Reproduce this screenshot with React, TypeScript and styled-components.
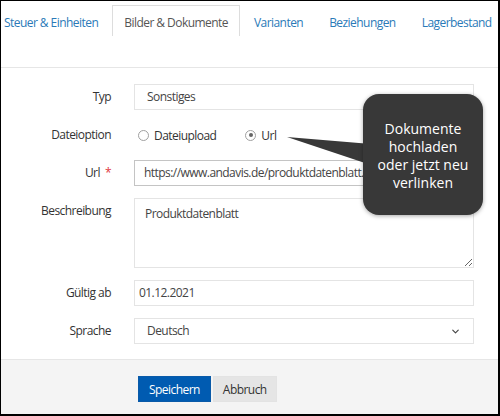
import React from "react";
import styled, { createGlobalStyle } from "styled-components";
import { ChevronDown } from "lucide-react";

const GlobalStyle = createGlobalStyle`
  body {
    margin: 0;
    font-family: "Open Sans", "Noto Sans", sans-serif;
    background: #ffffff;
  }
`;

// the screenshot's text runs narrower than plain Open Sans, so tighten it
const uiText = `
  font-size: 12px;
  letter-spacing: -0.55px;
`;

const Frame = styled.div`
  position: relative;
  box-sizing: border-box;
  width: 500px;
  height: 416px;
  display: flex;
  flex-direction: column;
  overflow: hidden;
  border-style: solid;
  border-color: #000;
  border-width: 1px 2px 2px 1px;
  background: #fff;
`;

const TabBar = styled.div`
  display: flex;
  padding-top: 4px;
  margin-left: -9px;
  height: 31px;
`;

const Tab = styled.div<{ $active?: boolean }>`
  box-sizing: border-box;
  height: 31px;
  padding: 7px 11px 0;
  margin-right: 2px;
  ${uiText}
  line-height: 20px;
  white-space: nowrap;
  color: ${(p) => (p.$active ? "#555555" : "#2a7ab8")};
  border: 1px solid ${(p) => (p.$active ? "#dddddd" : "transparent")};
  border-bottom: none;
`;

const Pane = styled.div`
  margin-top: 31px;
  border-top: 1px solid #e6e6e6;
  padding: 16px 24px 15px 0;
`;

const FormGrid = styled.div`
  display: grid;
  grid-template-columns: 110px 1fr;
  column-gap: 23px;
  row-gap: 12px;
`;

const Label = styled.div`
  ${uiText}
  line-height: 26px;
  color: #333;
  text-align: right;
  white-space: nowrap;
`;

const Required = styled.span`
  color: #e0353b;
  margin-left: 5px;
`;

const Field = styled.div<{ $pad?: number; $dark?: boolean }>`
  box-sizing: border-box;
  height: 26px;
  border: 1px solid ${(p) => (p.$dark ? "#c4c4c4" : "#e4e4e4")};
  padding: 0 ${(p) => p.$pad ?? 12}px;
  ${uiText}
  line-height: 24px;
  color: #444;
  white-space: nowrap;
  overflow: hidden;
  display: flex;
  align-items: center;
`;

const FieldText = styled.span`
  flex: 1;
  overflow: hidden;
`;

const Area = styled.textarea`
  box-sizing: border-box;
  height: 70px;
  width: 100%;
  border: 1px solid #e4e4e4;
  padding: 5px 10px;
  margin: 0;
  font-family: "Open Sans", "Noto Sans", sans-serif;
  ${uiText}
  line-height: 20px;
  color: #444;
  resize: vertical;
  outline: none;
  display: block;
`;

const RadioRow = styled.div`
  display: flex;
  align-items: center;
  height: 26px;
  padding-left: 4px;
  gap: 29px;
`;

const RadioOption = styled.label`
  display: flex;
  align-items: center;
  gap: 5px;
  ${uiText}
  color: #333;
`;

const RadioDot = styled.span<{ $checked?: boolean }>`
  box-sizing: border-box;
  width: 11px;
  height: 11px;
  border-radius: 50%;
  border: 1px solid #a0a0a0;
  background: #fff;
  display: flex;
  align-items: center;
  justify-content: center;

  &::after {
    content: "";
    width: 4px;
    height: 4px;
    border-radius: 50%;
    background: ${(p) => (p.$checked ? "#666" : "transparent")};
  }
`;

const Footer = styled.div`
  flex: 1;
  background: #f4f4f4;
  border-top: 1px solid #e6e6e6;
  padding: 16px 0 0 137px;
  display: flex;
  align-items: flex-start;
  gap: 2px;
`;

const Button = styled.button<{ $primary?: boolean }>`
  box-sizing: border-box;
  height: 26px;
  padding: 0 ${(p) => (p.$primary ? 10 : 9)}px;
  border: 1px solid ${(p) => (p.$primary ? "#0a5aa8" : "#e3e3e3")};
  background: ${(p) => (p.$primary ? "#005bb1" : "#e5e5e5")};
  color: ${(p) => (p.$primary ? "#ffffff" : "#333333")};
  font-family: "Open Sans", "Noto Sans", sans-serif;
  ${uiText}
  cursor: pointer;
`;

const Bubble = styled.div`
  position: absolute;
  left: 362px;
  top: 93px;
  width: 120px;
  height: 121px;
  box-sizing: border-box;
  border-radius: 16px;
  background: #383838;
  box-shadow: 0 1px 4px rgba(0, 0, 0, 0.35);
  color: #fff;
  font-size: 14px;
  line-height: 18px;
  text-align: center;
  display: flex;
  align-items: center;
  justify-content: center;
  padding-top: 2px;
`;

const Pointer = styled.svg`
  position: absolute;
  left: 284px;
  top: 132px;
`;

export default function App() {
  return (
    <>
      <GlobalStyle />
      <Frame>
        <TabBar>
          <Tab>Steuer &amp; Einheiten</Tab>
          <Tab $active>Bilder &amp; Dokumente</Tab>
          <Tab>Varianten</Tab>
          <Tab>Beziehungen</Tab>
          <Tab>Lagerbestand</Tab>
        </TabBar>

        <Pane>
          <FormGrid>
            <Label>Typ</Label>
            <Field>
              <FieldText>Sonstiges</FieldText>
              <ChevronDown size={11} strokeWidth={2.5} color="#444" />
            </Field>

            <Label>Dateioption</Label>
            <RadioRow>
              <RadioOption>
                <RadioDot />
                Dateiupload
              </RadioOption>
              <RadioOption>
                <RadioDot $checked />
                Url
              </RadioOption>
            </RadioRow>

            <Label>
              Url<Required>*</Required>
            </Label>
            <Field $dark $pad={9}>
              <FieldText>https://www.andavis.de/produktdatenblatt.pdf</FieldText>
            </Field>

            <Label>Beschreibung</Label>
            <Area readOnly defaultValue="Produktdatenblatt" />

            <Label>Gültig ab</Label>
            <Field $pad={4}>
              <FieldText>01.12.2021</FieldText>
            </Field>

            <Label>Sprache</Label>
            <Field>
              <FieldText>Deutsch</FieldText>
              <ChevronDown size={11} strokeWidth={2.5} color="#444" />
            </Field>
          </FormGrid>
        </Pane>

        <Footer>
          <Button $primary>Speichern</Button>
          <Button>Abbruch</Button>
        </Footer>

        <Pointer width="90" height="40" viewBox="0 0 90 40">
          <polygon points="2,4 86,11 86,32" fill="#383838" />
        </Pointer>
        <Bubble>
          Dokumente
          <br />
          hochladen
          <br />
          oder jetzt neu
          <br />
          verlinken
        </Bubble>
      </Frame>
    </>
  );
}
